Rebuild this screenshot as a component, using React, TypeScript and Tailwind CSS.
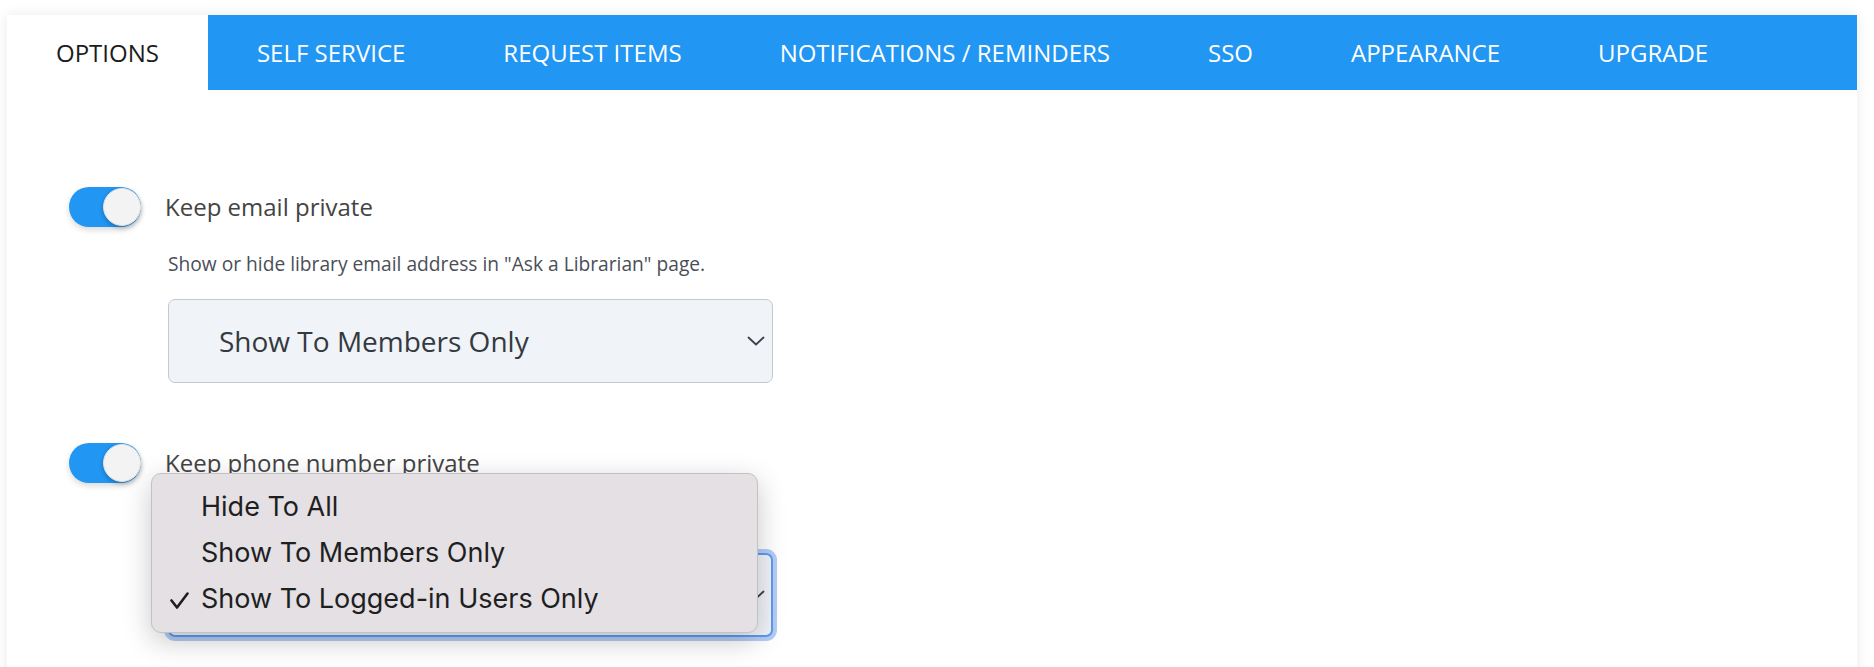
import React from "react";

const tabs = [
  "OPTIONS",
  "SELF SERVICE",
  "REQUEST ITEMS",
  "NOTIFICATIONS / REMINDERS",
  "SSO",
  "APPEARANCE",
  "UPGRADE",
];

function Toggle() {
  return (
    <div className="relative w-[72px] h-[40px] shrink-0 rounded-full bg-[#2196f3] shadow-[0_3px_6px_rgba(0,0,0,0.15)]">
      <div className="absolute right-0 top-[1px] w-[38px] h-[38px] rounded-full bg-[#f3f3f3] border border-[#e2e2e2] shadow-[0_2px_4px_rgba(0,0,0,0.25)]" />
    </div>
  );
}

function Chevron() {
  return (
    <svg width="18" height="10" viewBox="0 0 18 10" fill="none">
      <path d="M1.5 1.5 L9 8.5 L16.5 1.5" stroke="#3d4148" strokeWidth="1.8" strokeLinecap="round" strokeLinejoin="round" />
    </svg>
  );
}

function Check() {
  return (
    <svg width="19" height="17" viewBox="0 0 19 17" fill="none">
      <path d="M1.5 8.5 L7 15.5 L17.5 1.5" stroke="#1f1f1f" strokeWidth="2.6" strokeLinecap="round" strokeLinejoin="round" />
    </svg>
  );
}

function Select({ value, focused }: { value: string; focused?: boolean }) {
  return (
    <div
      className={
        focused
          ? "w-[605px] h-[84px] rounded-[7px] border-2 border-[#5d9cf0] bg-[#f0f3f8] shadow-[0_0_0_4px_#b3cdf6] flex items-center pl-[49px] pr-[6px]"
          : "w-[605px] h-[84px] rounded-[7px] border border-[#c3c9d2] bg-[#f0f3f8] flex items-center pl-[50px] pr-[7px]"
      }
    >
      <span className="flex-1 text-[28px] text-[#343a40]" style={{ fontFamily: '"Open Sans", sans-serif' }}>
        {value}
      </span>
      <Chevron />
    </div>
  );
}

export default function App() {
  return (
    <div className="w-[1874px] h-[667px] bg-white overflow-hidden" style={{ fontFamily: '"Open Sans", sans-serif' }}>
      <div className="ml-[7px] mt-[15px] w-[1850px] h-[700px] bg-white shadow-[0_0_12px_rgba(0,0,0,0.09)]">
        <div className="flex h-[75px] bg-[#2196f3]">
          {tabs.map((t, i) => (
            <div
              key={t}
              className={
                i === 0
                  ? "flex items-center px-[49px] bg-white text-[#1c1c1c] text-[24px]"
                  : "flex items-center px-[49px] text-white text-[24px]"
              }
            >
              {t}
            </div>
          ))}
        </div>

        <div className="relative pl-[62px] pt-[97px]">
          <div className="flex items-center">
            <Toggle />
            <span className="ml-[24px] text-[24px] text-[#444]">Keep email private</span>
          </div>
          <div className="ml-[99px] mt-[23px] text-[19.2px] leading-[27px] text-[#4a4f57]">
            Show or hide library email address in "Ask a Librarian" page.
          </div>
          <div className="ml-[99px] mt-[22px]">
            <Select value="Show To Members Only" />
          </div>

          <div className="relative mt-[60px]">
            <div className="flex items-center">
              <Toggle />
              <span className="ml-[24px] text-[24px] text-[#444]">Keep phone number private</span>
            </div>
            <div className="ml-[99px] mt-[23px] text-[19.2px] leading-[27px] text-[#4a4f57]">
              Show or hide library phone number in "Ask a Librarian" page.
            </div>
            <div className="ml-[99px] mt-[20px]">
              <Select value="Show To Logged-in Users Only" focused />
            </div>

            <div
              className="absolute left-[82px] top-[30px] w-[607px] py-[10px] rounded-[10px] border border-[#c4c1c5] bg-[#e4e0e4] shadow-[0_8px_28px_rgba(0,0,0,0.22)]"
              style={{ fontFamily: 'Inter, "Noto Sans", sans-serif' }}
            >
              {[
                { label: "Hide To All", checked: false },
                { label: "Show To Members Only", checked: false },
                { label: "Show To Logged-in Users Only", checked: true },
              ].map((o) => (
                <div key={o.label} className="flex items-center h-[46px] text-[27px] text-[#1f1f1f]">
                  <span className="w-[49px] flex justify-end pr-[12px] pt-[2px]">
                    {o.checked ? <Check /> : null}
                  </span>
                  <span>{o.label}</span>
                </div>
              ))}
            </div>
          </div>
        </div>
      </div>
    </div>
  );
}
